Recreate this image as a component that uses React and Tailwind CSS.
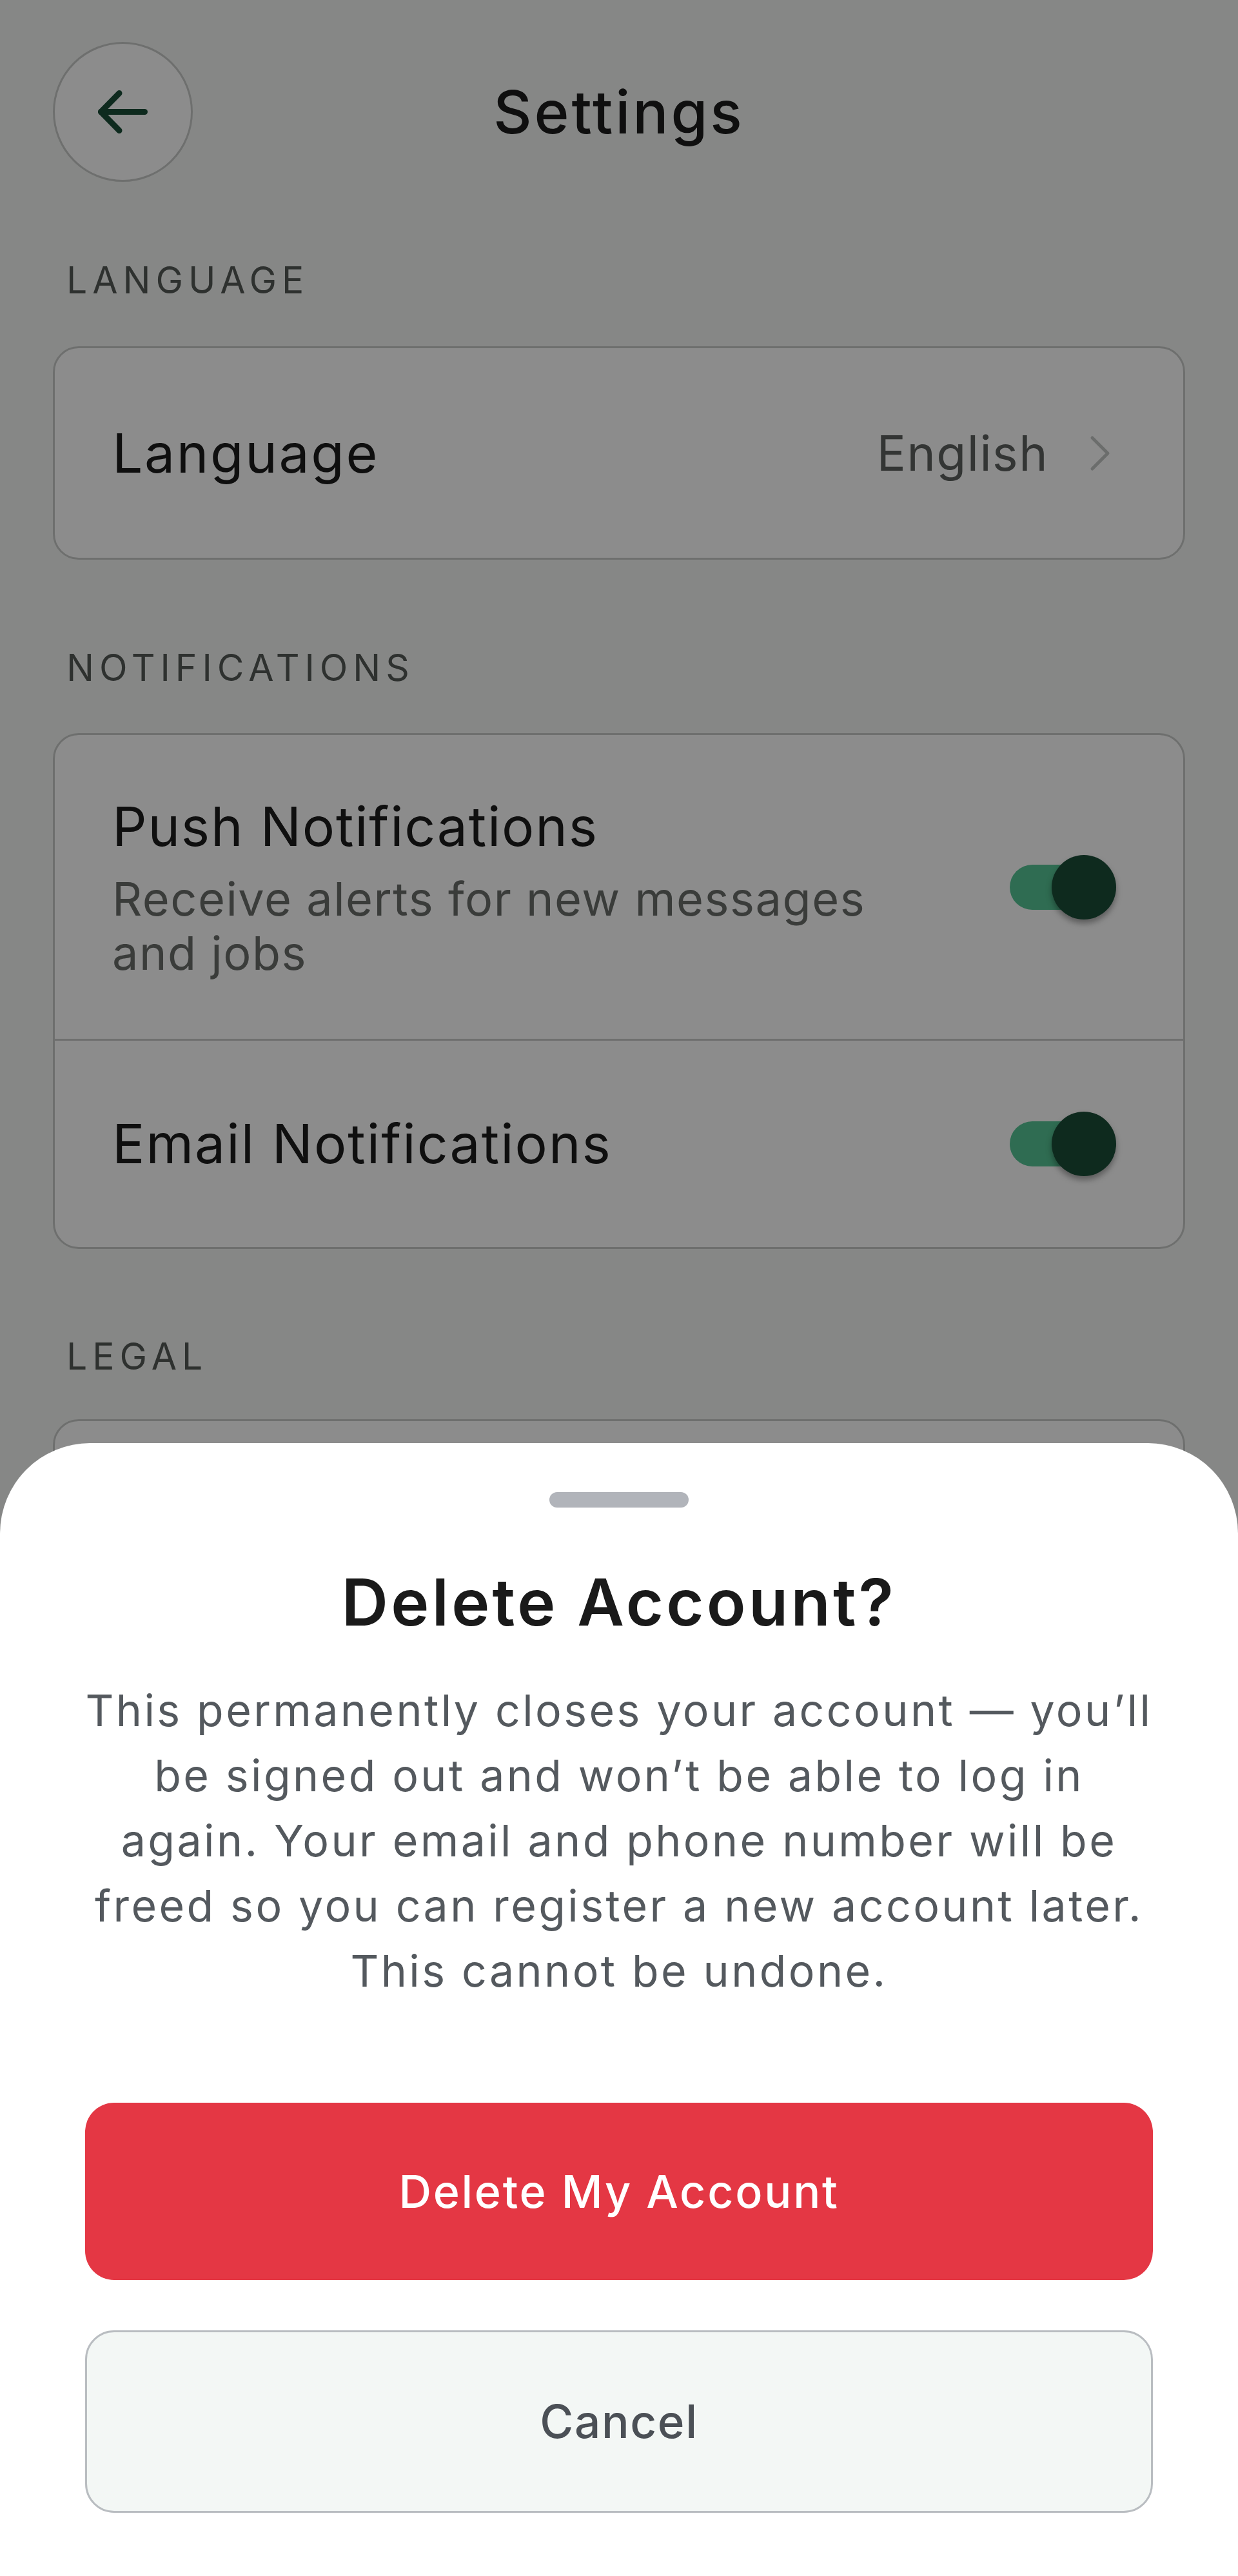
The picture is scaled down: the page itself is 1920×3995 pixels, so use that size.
import React from "react";

function Toggle() {
  return (
    <div className="relative h-[100px] w-[165px] shrink-0">
      <div className="absolute left-0 top-[15px] h-[70px] w-[150px] rounded-full bg-[#56c595]" />
      <div className="absolute right-0 top-0 h-[100px] w-[100px] rounded-full bg-[#1b4d38] shadow-[0_6px_10px_rgba(0,0,0,0.35)]" />
    </div>
  );
}

function SectionLabel({ children, className = "" }) {
  return (
    <div className={`pl-[21px] text-[57px] leading-[70px] tracking-[0.14em] text-[#545957] ${className}`}>
      {children}
    </div>
  );
}

export default function App() {
  return (
    <div className="relative h-[3995px] w-full overflow-hidden bg-[#f4f6f4] font-['Inter',sans-serif] tracking-[0.02em]">
      <div className="px-[82px] pt-[65px]">
        <header className="grid h-[217px] grid-cols-[217px_1fr_217px] items-center">
          <button className="flex h-[217px] w-[217px] items-center justify-center rounded-full border-[3px] border-[#c8cbc9] bg-white">
            <svg width="77" height="67" viewBox="0 0 77 67" fill="none" stroke="#1b4d38" strokeWidth="9" strokeLinecap="round" strokeLinejoin="round">
              <polyline points="33,4.5 4.5,33.5 33,62.5" />
              <line x1="4.5" y1="33.5" x2="72.5" y2="33.5" />
            </svg>
          </button>
          <h1 className="text-center text-[92px] leading-[100px] font-medium tracking-[0.042em] text-[#1c1c1c]">Settings</h1>
          <div />
        </header>

        <SectionLabel className="mt-[118px]">LANGUAGE</SectionLabel>
        <div className="mt-[67px] flex h-[331px] items-center justify-between rounded-[40px] border-[3px] border-[#c8cbc9] bg-white pl-[89px] pr-[111px]">
          <span className="text-[84px] leading-[100px] tracking-[0.031em] text-[#1c1c1c]">Language</span>
          <div className="flex items-center gap-[62px]">
            <span className="text-[75px] leading-[100px] tracking-[0.02em] text-[#5e6260]">English</span>
            <svg width="36" height="56" viewBox="0 0 36 56" fill="none" stroke="#c4c7c5" strokeWidth="5" strokeLinecap="round" strokeLinejoin="round">
              <polyline points="6,4 30,28 6,52" />
            </svg>
          </div>
        </div>

        <SectionLabel className="mt-[133px]">NOTIFICATIONS</SectionLabel>
        <div className="mt-[66px] overflow-hidden rounded-[40px] border-[3px] border-[#c8cbc9] bg-white">
          <div className="flex h-[471px] items-center justify-between pl-[89px] pr-[104px]">
            <div>
              <p className="text-[84px] leading-[100px] tracking-[0.021em] text-[#1c1c1c]">Push Notifications</p>
              <p className="mt-[20px] text-[72px] leading-[84px] tracking-[0.021em] text-[#6a6d6b]">
                Receive alerts for new messages
                <br />
                and jobs
              </p>
            </div>
            <Toggle />
          </div>
          <div className="flex h-[323px] items-center justify-between border-t-[3px] border-[#c8cbc9] pl-[89px] pr-[104px]">
            <p className="text-[84px] leading-[100px] tracking-[0.024em] text-[#1c1c1c]">Email Notifications</p>
            <Toggle />
          </div>
        </div>

        <SectionLabel className="mt-[132px]">LEGAL</SectionLabel>
        <div className="mt-[62px] overflow-hidden rounded-[40px] border-[3px] border-[#c8cbc9] bg-white">
          <div className="flex h-[300px] items-center justify-between pl-[89px] pr-[111px]">
            <span className="text-[84px] leading-[100px] text-[#1c1c1c]">Terms of Service</span>
          </div>
          <div className="flex h-[300px] items-center justify-between border-t-[3px] border-[#c8cbc9] pl-[89px] pr-[111px]">
            <span className="text-[84px] leading-[100px] text-[#1c1c1c]">Privacy Policy</span>
          </div>
        </div>
      </div>

      <div className="absolute inset-0 bg-black/45" />

      <div className="absolute inset-x-0 bottom-0 flex h-[1757px] flex-col items-center rounded-t-[140px] bg-white px-[132px] pt-[76px]">
        <div className="h-[24px] w-[216px] rounded-full bg-[#b1b4ba]" />
        <h2 className="mt-[92px] text-[100px] leading-[110px] font-semibold tracking-[0.043em] text-[#1a1a1a]">
          Delete Account?
        </h2>
        <p className="mt-[62px] whitespace-nowrap text-center text-[68px] leading-[101px] tracking-[0.05em] text-[#54595e]">
          This permanently closes your account — you’ll
          <br />
          be signed out and won’t be able to log in
          <br />
          again. Your email and phone number will be
          <br />
          freed so you can register a new account later.
          <br />
          This cannot be undone.
        </p>
        <button className="mt-[154px] flex h-[275px] w-full items-center justify-center rounded-[45px] bg-[#e43744] text-[70px] font-medium tracking-[0.039em] text-white">
          Delete My Account
        </button>
        <button className="mt-[78px] flex h-[283px] w-full items-center justify-center rounded-[45px] border-[3px] border-[#b9bdc1] bg-[#f3f7f5] text-[71px] font-medium tracking-[0.023em] text-[#4b5056]">
          Cancel
        </button>
      </div>
    </div>
  );
}
